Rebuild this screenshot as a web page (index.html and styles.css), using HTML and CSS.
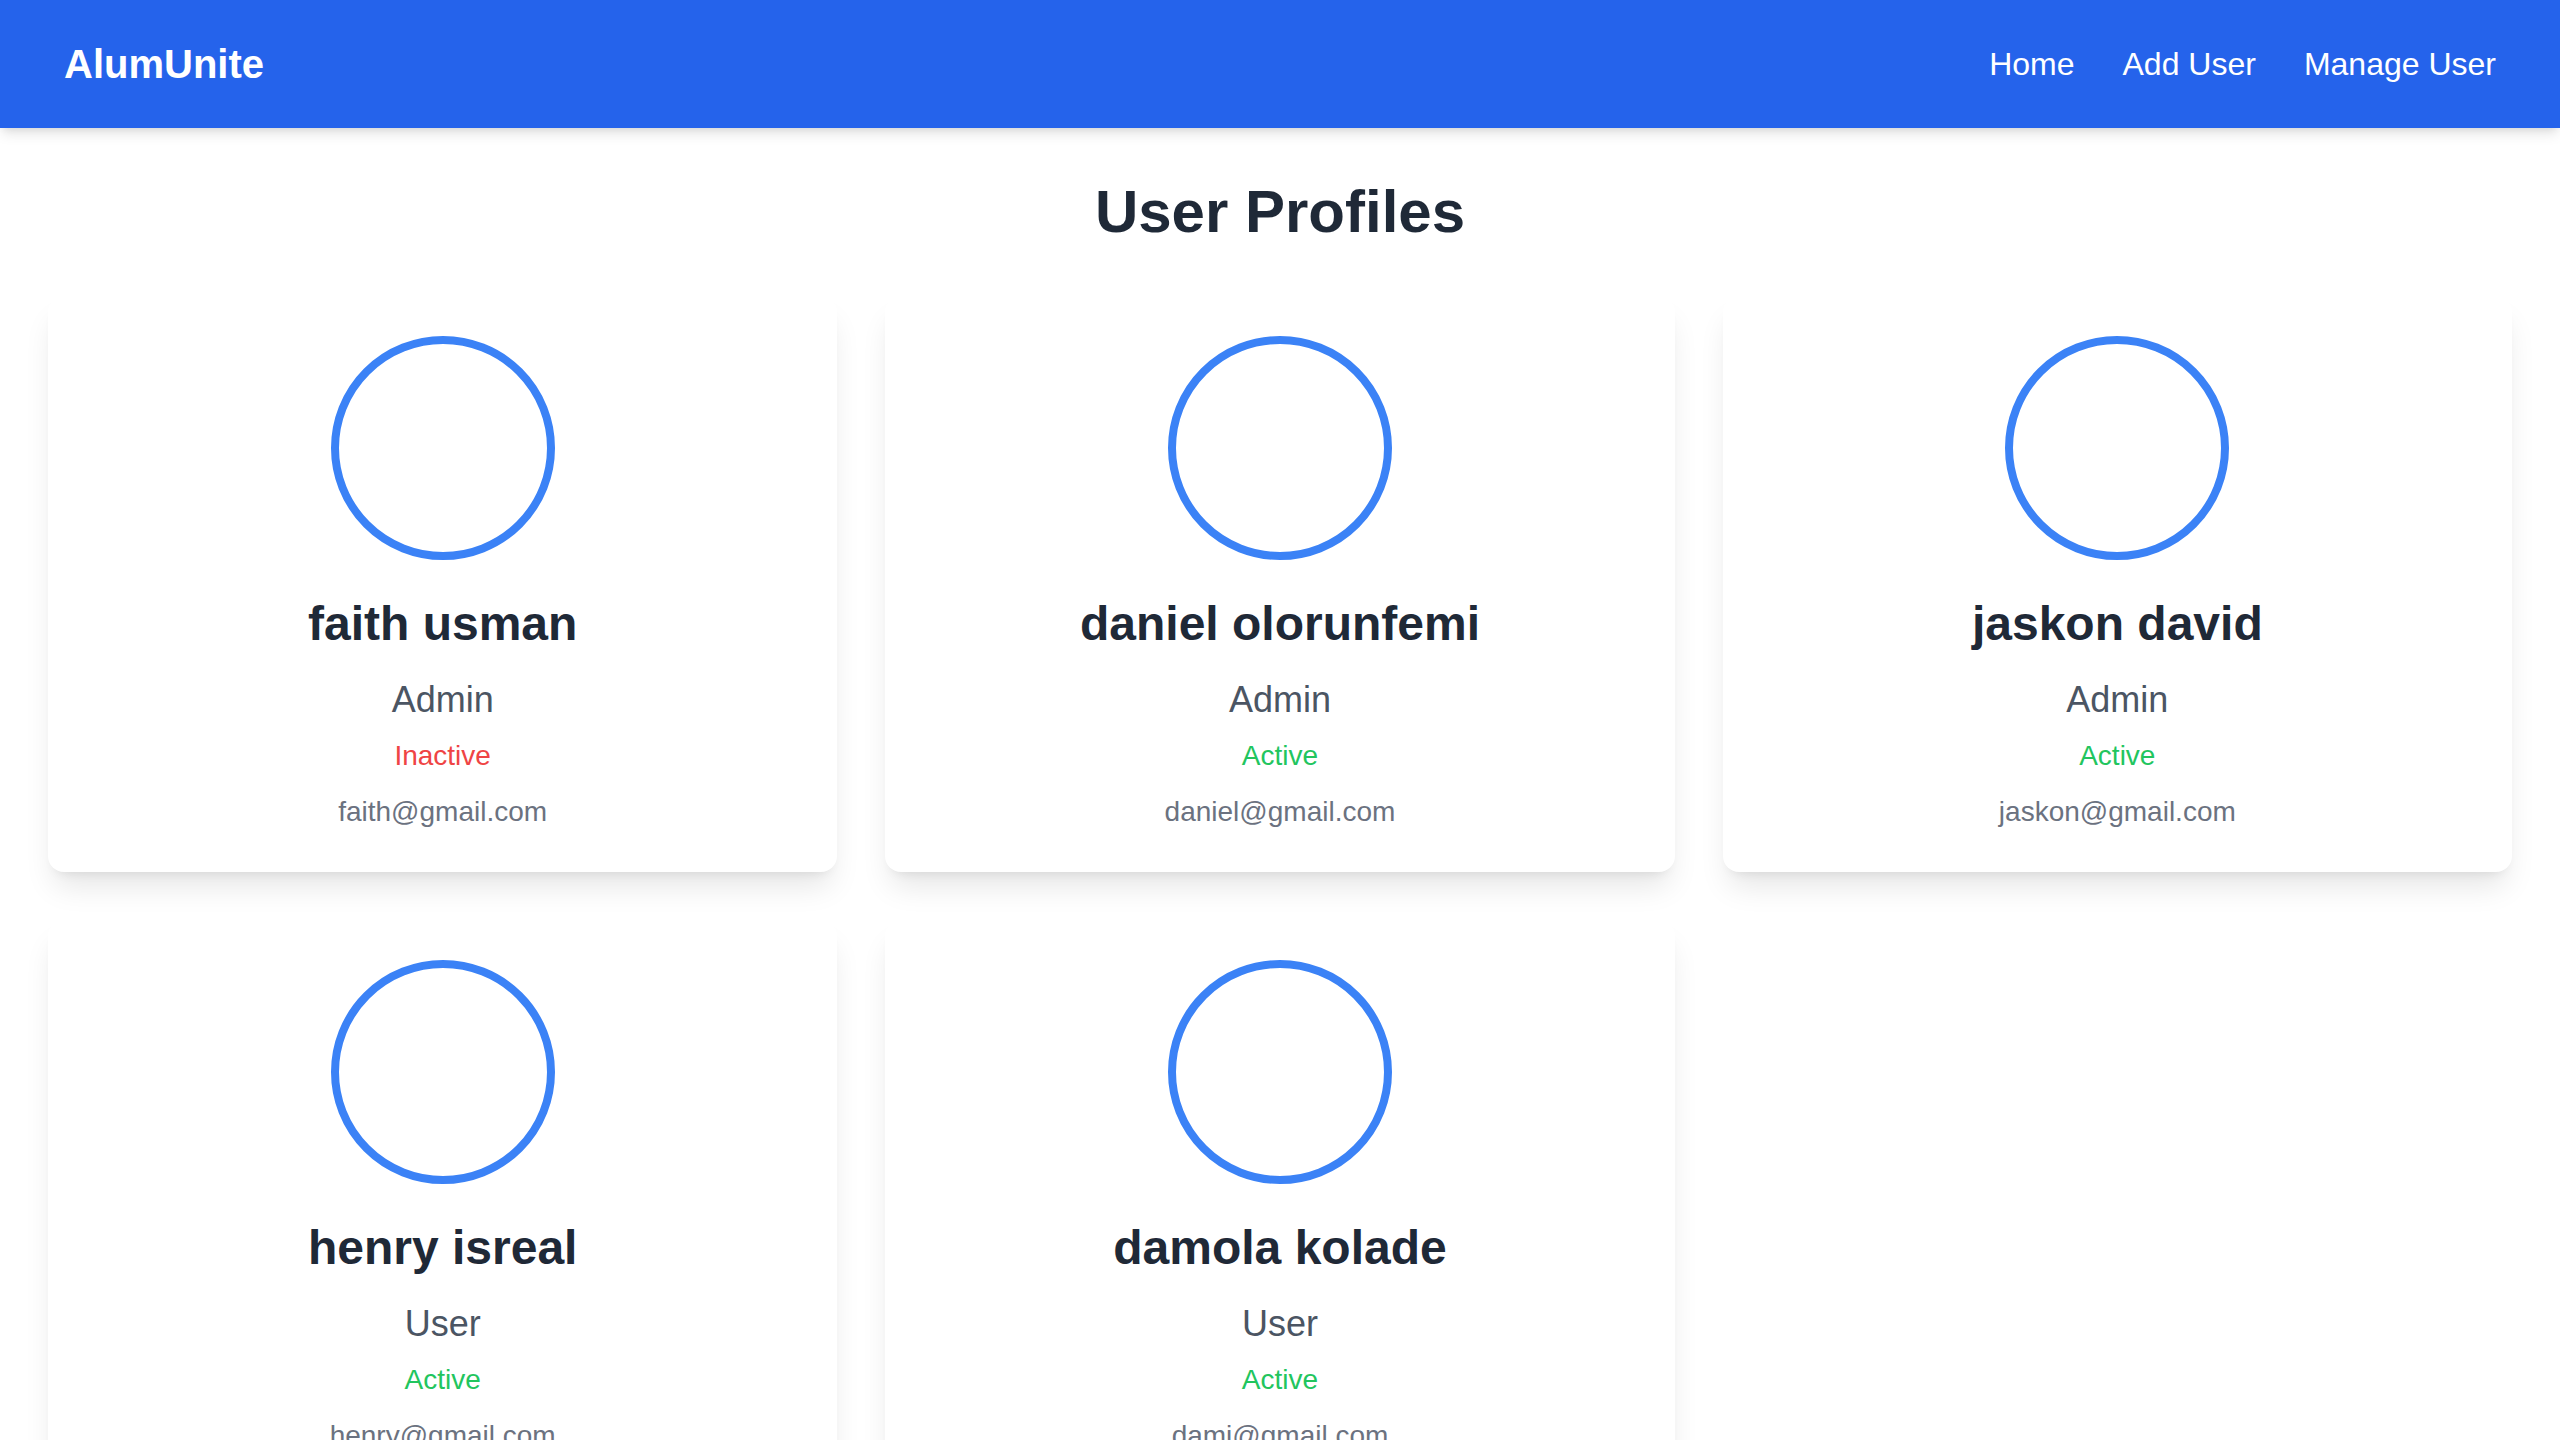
FILE: index.html
```html
<!DOCTYPE html>
<html lang="en">
<head>
<meta charset="utf-8">
<title>AlumUnite - User Profiles</title>
<link rel="stylesheet" href="styles.css">
</head>
<body>
<nav class="navbar">
  <div class="brand">AlumUnite</div>
  <div class="nav-links">
    <a href="#" class="nav-link">Home</a>
    <a href="#" class="nav-link">Add User</a>
    <a href="#" class="nav-link">Manage User</a>
  </div>
</nav>
<main class="page">
  <h1 class="page-title">User Profiles</h1>
  <div class="card-grid">
    <div class="card">
      <div class="avatar"></div>
      <h2 class="name">faith usman</h2>
      <p class="role">Admin</p>
      <p class="status inactive">Inactive</p>
      <p class="email">faith@gmail.com</p>
    </div>
    <div class="card">
      <div class="avatar"></div>
      <h2 class="name">daniel olorunfemi</h2>
      <p class="role">Admin</p>
      <p class="status active">Active</p>
      <p class="email">daniel@gmail.com</p>
    </div>
    <div class="card">
      <div class="avatar"></div>
      <h2 class="name">jaskon david</h2>
      <p class="role">Admin</p>
      <p class="status active">Active</p>
      <p class="email">jaskon@gmail.com</p>
    </div>
    <div class="card">
      <div class="avatar"></div>
      <h2 class="name">henry isreal</h2>
      <p class="role">User</p>
      <p class="status active">Active</p>
      <p class="email">henry@gmail.com</p>
    </div>
    <div class="card">
      <div class="avatar"></div>
      <h2 class="name">damola kolade</h2>
      <p class="role">User</p>
      <p class="status active">Active</p>
      <p class="email">dami@gmail.com</p>
    </div>
  </div>
</main>
</body>
</html>
```
FILE: styles.css
```css
* {
  box-sizing: border-box;
}

html, body {
  margin: 0;
  padding: 0;
  background: #ffffff;
  font-family: "Liberation Sans", Arial, sans-serif;
}

.navbar {
  height: 128px;
  padding: 0 64px;
  background: #2563eb;
  display: flex;
  align-items: center;
  justify-content: space-between;
  box-shadow: 0 8px 12px -2px rgba(0, 0, 0, 0.1), 0 4px 8px -4px rgba(0, 0, 0, 0.1);
  position: relative;
  z-index: 1;
}

.brand {
  color: #ffffff;
  font-size: 40px;
  font-weight: 700;
  line-height: 56px;
}

.nav-links {
  display: flex;
  gap: 48px;
}

.nav-link {
  color: #ffffff;
  text-decoration: none;
  font-size: 32px;
  line-height: 48px;
}

.page {
  padding: 48px;
}

.page-title {
  margin: 0 0 48px;
  text-align: center;
  font-size: 60px;
  line-height: 72px;
  font-weight: 700;
  color: #1f2937;
}

.card-grid {
  display: grid;
  grid-template-columns: repeat(3, 1fr);
  gap: 48px;
}

.card {
  background: #ffffff;
  border-radius: 16px;
  padding: 40px;
  display: flex;
  flex-direction: column;
  align-items: center;
  text-align: center;
  box-shadow: 0 20px 30px -6px rgba(0, 0, 0, 0.1), 0 8px 12px -8px rgba(0, 0, 0, 0.1);
}

.avatar {
  width: 224px;
  height: 224px;
  border-radius: 50%;
  border: 8px solid #3b82f6;
}

.name {
  margin: 32px 0 0;
  font-size: 48px;
  line-height: 64px;
  font-weight: 700;
  color: #1f2937;
}

.role {
  margin: 16px 0 0;
  font-size: 36px;
  line-height: 56px;
  color: #4b5563;
}

.status {
  margin: 8px 0 0;
  font-size: 28px;
  line-height: 40px;
}

.status.active {
  color: #22c55e;
}

.status.inactive {
  color: #ef4444;
}

.email {
  margin: 16px 0 0;
  font-size: 28px;
  line-height: 40px;
  color: #6b7280;
}
```
